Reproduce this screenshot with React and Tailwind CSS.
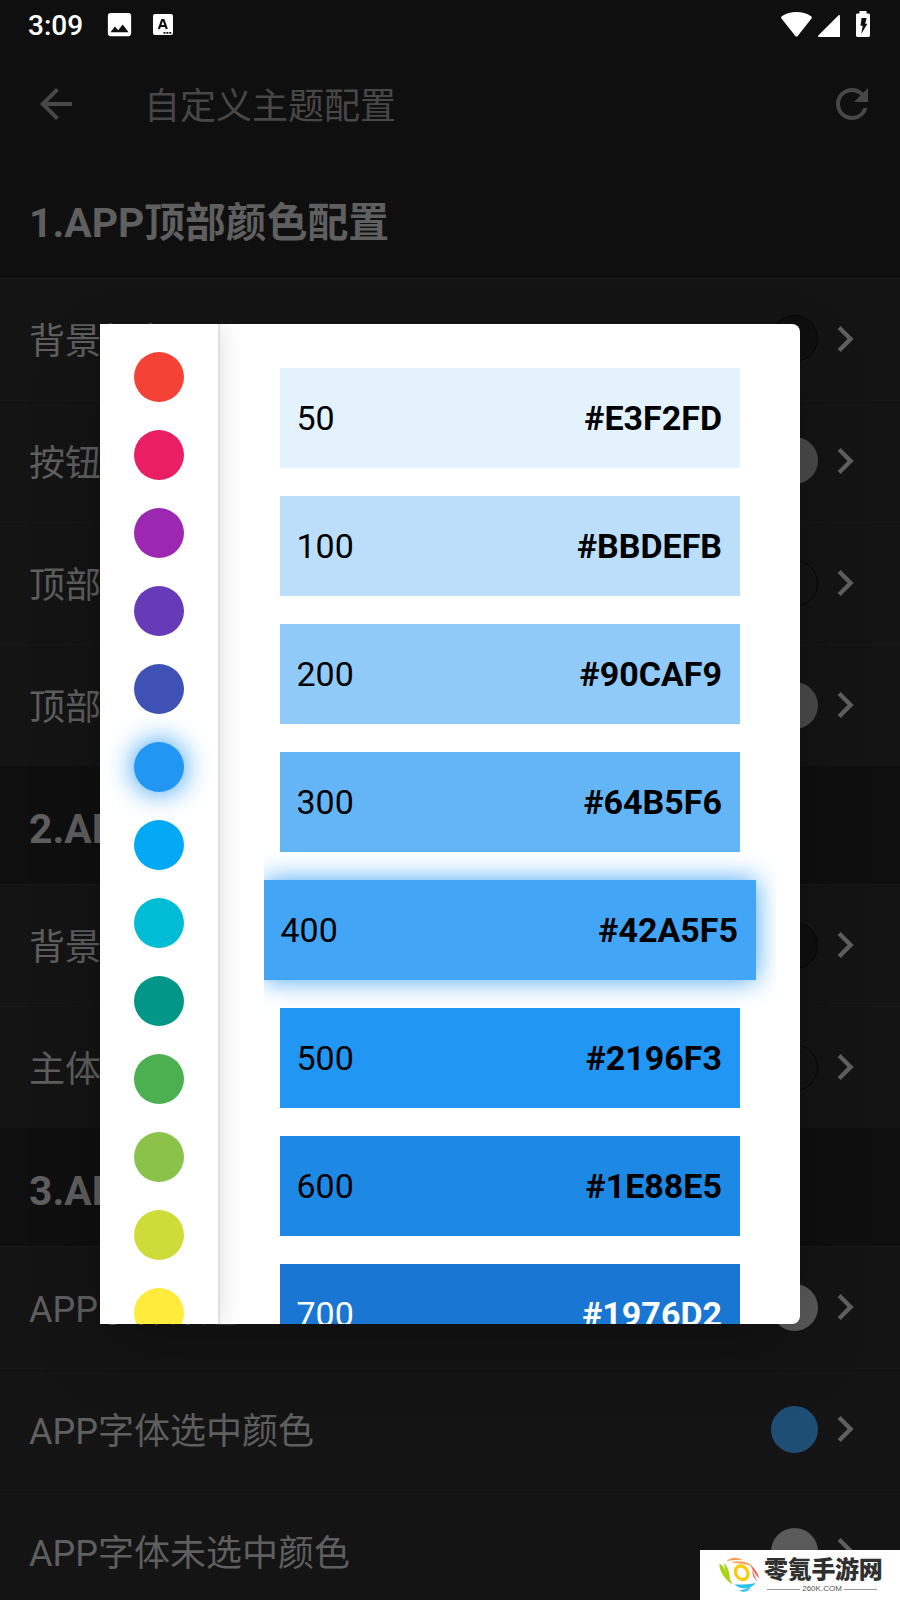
import { MdArrowBack, MdChevronRight, MdImage, MdRefresh } from "react-icons/md";
import clsx from "clsx";

const sections = [
  {
    title: "1.APP顶部颜色配置",
    rows: [
      { label: "背景颜色", dot: "bg-[#0f0f0f] border border-[#050505]" },
      { label: "按钮颜色", dot: "bg-[#4b4b4b]" },
      { label: "顶部字体颜色", dot: "bg-[#141414] border border-[#050505]" },
      { label: "顶部图标颜色", dot: "bg-[#4b4b4b]" },
    ],
  },
  {
    title: "2.APP主体颜色配置",
    rows: [
      { label: "背景颜色", dot: "bg-[#0f0f0f] border border-[#050505]" },
      { label: "主体颜色", dot: "bg-[#141414] border border-[#050505]" },
    ],
  },
  {
    title: "3.APP字体颜色配置",
    rows: [
      { label: "APP字体颜色", dot: "bg-[#5b5b5b]" },
      { label: "APP字体选中颜色", dot: "bg-[#1f4e74]" },
      { label: "APP字体未选中颜色", dot: "bg-[#5a5a5a]" },
    ],
  },
];

const swatches = [
  "bg-[#f44336]",
  "bg-[#e91e63]",
  "bg-[#9c27b0]",
  "bg-[#673ab7]",
  "bg-[#3f51b5]",
  "bg-[#2196f3]",
  "bg-[#03a9f4]",
  "bg-[#00bcd4]",
  "bg-[#009688]",
  "bg-[#4caf50]",
  "bg-[#8bc34a]",
  "bg-[#cddc39]",
  "bg-[#ffeb3b]",
];

const shades = [
  { name: "50", hex: "#E3F2FD", tone: "bg-[#e3f2fd] text-black" },
  { name: "100", hex: "#BBDEFB", tone: "bg-[#bbdefb] text-black" },
  { name: "200", hex: "#90CAF9", tone: "bg-[#90caf9] text-black" },
  { name: "300", hex: "#64B5F6", tone: "bg-[#64b5f6] text-black" },
  { name: "400", hex: "#42A5F5", tone: "bg-[#42a5f5] text-black" },
  { name: "500", hex: "#2196F3", tone: "bg-[#2196f3] text-black" },
  { name: "600", hex: "#1E88E5", tone: "bg-[#1e88e5] text-black" },
  { name: "700", hex: "#1976D2", tone: "bg-[#1976d2] text-white" },
];

const selectedSwatch = 5;
const selectedShade = "400";

function StatusBar() {
  return (
    <div className="flex h-12 items-center pl-7 pr-[30px] text-white">
      <span className="w-[75.5px] pt-[3px] text-[28px] font-medium leading-none">3:09</span>
      <MdImage className="size-[31px]" />
      <svg className="ml-[18.5px] h-[21px] w-5" viewBox="0 0 20 21">
        <rect width="20" height="21" rx="2" fill="#fff" />
        <path d="M5.900 15 9.100 6h1.500l3.200 9M7.200 12h5.200" fill="none" stroke="#0f0f0f" strokeWidth="2.200" />
        <path d="M10.500 18h2v1.800h-2zM13.400 18h2v1.800h-2zM16.300 18h2v1.800h-2z" fill="#0f0f0f" />
      </svg>
      <div className="ml-auto flex items-end">
        <svg className="h-[25px] w-[31px]" viewBox="0 0 31 25" fill="#fff">
          <path d="M.5 6.400C-.1 5.700.1 4.700.9 4.200 5.200 1.400 10.200 0 15.500 0s10.300 1.400 14.600 4.200c.8.500 1 1.500.4 2.200L16.700 24c-.7.800-1.700.8-2.400 0z" />
        </svg>
        <svg className="ml-1.5 size-[22px]" viewBox="0 0 22 22" fill="#fff">
          <path d="M20.600.3c.5-.5 1.400-.2 1.400.6V22H.9c-.9 0-1.200-1-.6-1.600z" />
        </svg>
        <svg className="ml-4 h-[26px] w-[14px]" viewBox="0 0 14 26">
          <path d="M3.500 0h7v2.500H12.500c.8 0 1.500.6 1.500 1.400V24.600c0 .8-.7 1.400-1.500 1.400h-11C.7 26 0 25.400 0 24.600V3.900c0-.8.7-1.400 1.500-1.400h2z" fill="#fff" />
          <path d="M5.600 7h5L9.200 12.700h2.200L5.200 23l1.500-8.300H4.500z" fill="#0f0f0f" />
        </svg>
      </div>
    </div>
  );
}

function AppBar() {
  return (
    <header className="flex h-28 items-center pl-8 pr-6 text-[#474747]">
      <MdArrowBack className="size-12" />
      <h1 className="ml-16 pt-1.5 text-[36px] leading-none">自定义主题配置</h1>
      <MdRefresh className="ml-auto size-12" />
    </header>
  );
}

function SettingRow({ label, dot }) {
  return (
    <div className="flex h-[122.2px] items-center border-t border-[#181818] bg-[#141414] pb-px pl-[29px] pr-[29px] text-[#5f5f5f]">
      <span className="pt-1.5 text-[36px] leading-none">{label}</span>
      <span className={clsx("ml-auto size-[47px] rounded-full", dot)} />
      <MdChevronRight className="ml-px size-[52px]" />
    </div>
  );
}

function ColorRail() {
  return (
    <div className="relative z-10 flex w-[120px] shrink-0 flex-col items-center gap-7 border-r-2 border-[#e0e0e0] bg-white pt-7 shadow-[0_0_26px_rgba(0,0,0,0.13)] [clip-path:inset(0_-20px_0_0)]">
      {swatches.map((color, i) => (
        <span
          key={color}
          className={clsx("size-[50px] shrink-0 rounded-full", color, i === selectedSwatch && "shadow-[0_0_28px_#2196f3]")}
        />
      ))}
    </div>
  );
}

function ShadeList() {
  return (
    <div className="ml-11 flex w-[512px] flex-col gap-7 overflow-hidden pr-5 pt-11">
      {shades.map(({ name, hex, tone }) => (
        <div
          key={name}
          className={clsx(
            "flex h-[100px] shrink-0 items-center justify-between pl-[16.5px] pr-[18px] text-[34px] leading-none",
            tone,
            name === selectedShade ? "shadow-[0_0_25px_#42a5f5]" : "mx-4"
          )}
        >
          <span>{name}</span>
          <span className="font-bold">{hex}</span>
        </div>
      ))}
    </div>
  );
}

function Watermark() {
  return (
    <div className="absolute bottom-0 right-0 flex h-[50px] w-[200px] items-center bg-white pl-[18px]">
      <svg className="h-9 w-[42px] shrink-0" viewBox="0 0 42 36">
        <ellipse cx="23.700" cy="15.700" rx="5.900" ry="7.200" fill="none" stroke="#fdca08" strokeWidth="3.200" transform="rotate(-35 23.700 15.700)" />
        <path d="M1.300 7c2 .2 3.500 1.500 4.700 4l8.800 16.500C7.500 23.500 1.500 15 1.300 7z" fill="#a8d414" />
        <path d="M6 6c4 4 6 10 6 17.500C8.500 18 6.500 12 6 6z" fill="#a8d414" />
        <path d="M8.500 4.200c4-4.200 11-4.500 16.500-1.400C19 2.600 14 3.200 8.500 4.200z" fill="#f59a50" />
        <path d="M12.500 5.200c9-2.200 17-.9 23 4.300-7-2.400-14-2.900-23-4.300z" fill="#f7a561" />
        <path d="M32.500 8c4.500 3.500 7.500 8 8.700 13.500-3.700-3.500-6.700-8-8.700-13.500z" fill="#ef6b58" />
        <path d="M34.500 13c1.500 4.500 3 8 5 11-3.300-2-5.500-6-5-11z" fill="#ef6b58" />
        <path d="M16.500 27.500c7 .2 14-.2 21.700-1.500-3.500 3.500-7.500 5.500-11 5.500-4 0-7.700-1.500-10.700-4z" fill="#2cc0ee" />
        <path d="M21 33c4 .3 8-.9 12-3-2.500 4.500-7.500 6.500-12 3z" fill="#2cc0ee" />
      </svg>
      <div className="ml-[4px] flex w-[120px] flex-col">
        <span className="whitespace-nowrap text-[24px] font-black leading-[26px] tracking-[-0.3px] text-[#303030]">零氪手游网</span>
        <div className="mt-[2px] flex items-center gap-0.5 pl-[3px] pr-[7px] font-['Liberation_Sans',sans-serif] text-[8px] leading-[8px] text-[#555]">
          <span className="h-px flex-1 bg-[#999]" />
          260K.COM
          <span className="h-px flex-1 bg-[#999]" />
        </div>
      </div>
    </div>
  );
}

export default function App() {
  return (
    <div className="relative h-[1600px] w-[900px] overflow-hidden bg-[#0f0f0f] font-['Roboto','Noto_Sans_CJK_SC',sans-serif]">
      <StatusBar />
      <AppBar />
      {sections.map(({ title, rows }) => (
        <section key={title}>
          <h2 className="flex h-[117.6px] items-center pl-[29px] pt-[9px] text-[40.800px] font-bold leading-none text-[#5f5f5f]">{title}</h2>
          {rows.map((row) => (
            <SettingRow key={row.label} {...row} />
          ))}
        </section>
      ))}

      <div className="absolute left-[100px] top-[324px] flex h-[1000px] w-[700px] rounded-r-[8px] shadow-[0_28px_70px_rgba(0,0,0,0.24)]">
        <div className="flex flex-1 overflow-hidden rounded-r-[8px] bg-white">
          <ColorRail />
          <ShadeList />
        </div>
      </div>
      <Watermark />
    </div>
  );
}
